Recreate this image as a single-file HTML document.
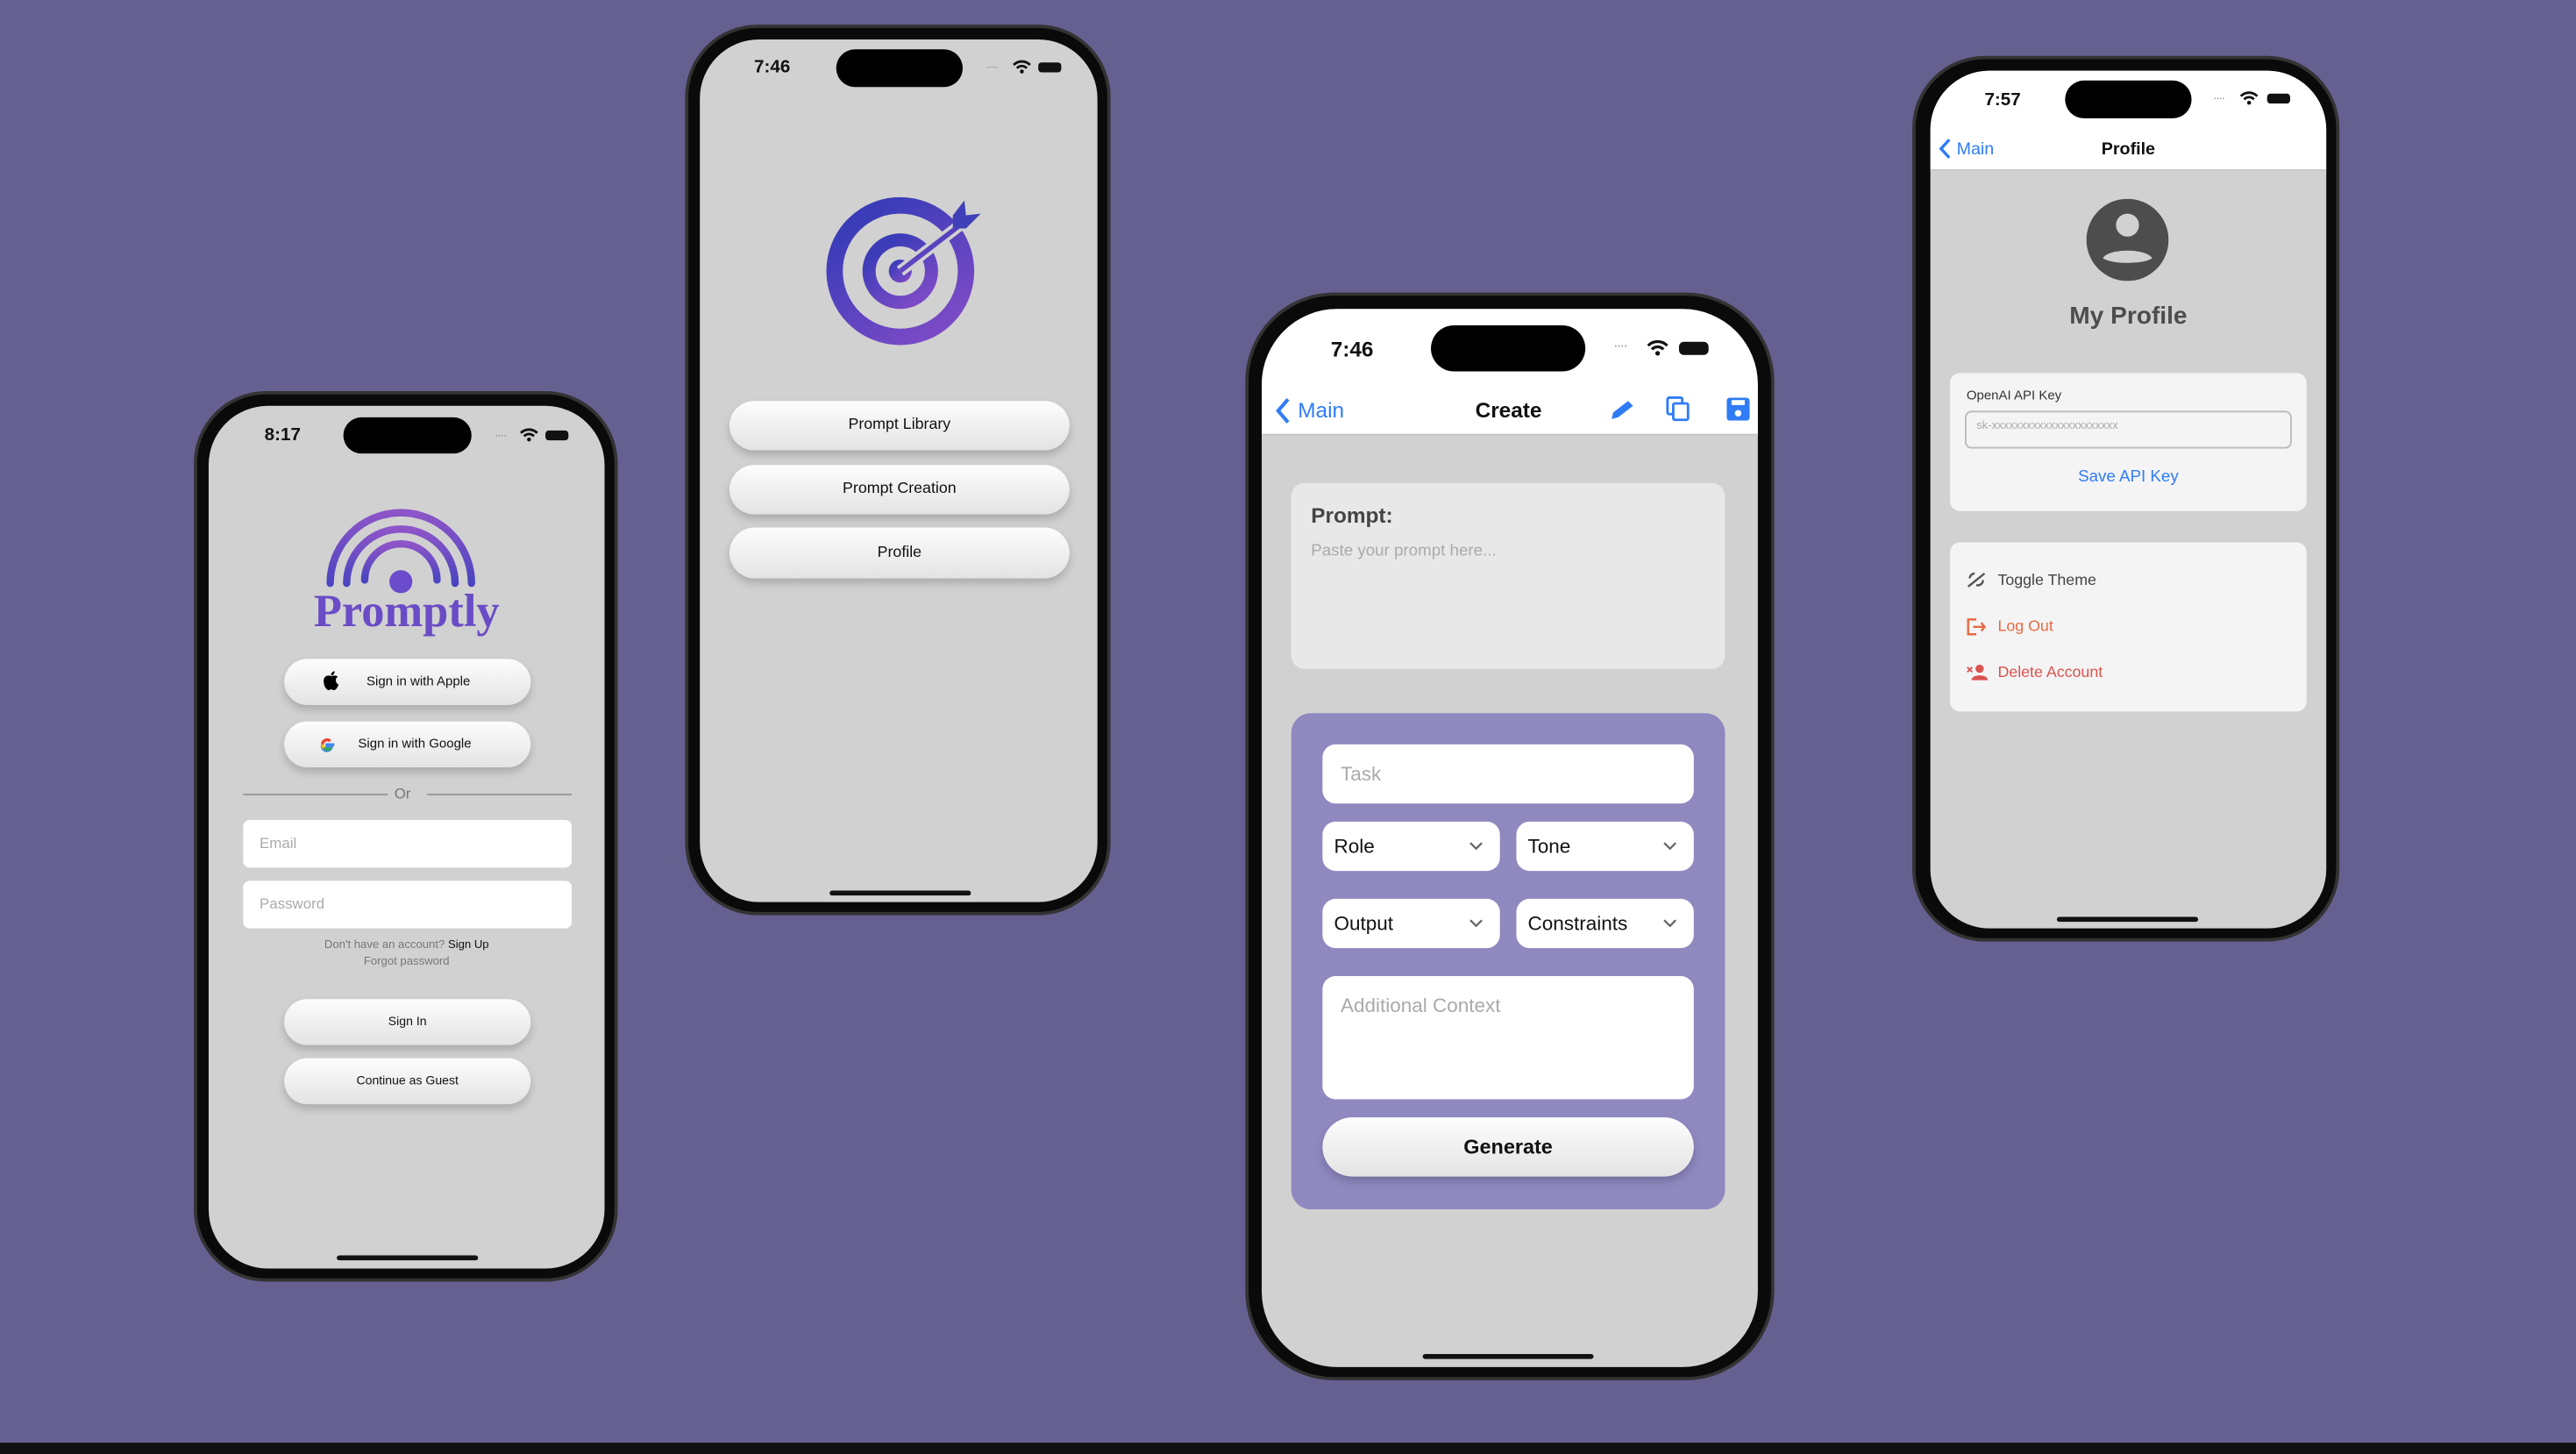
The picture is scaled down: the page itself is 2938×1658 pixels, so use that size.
<!DOCTYPE html>
<html><head><meta charset="utf-8">
<style>
html,body{margin:0;padding:0;width:2938px;height:1657px;overflow:hidden;background:#656090;}
#c{position:absolute;left:0;top:0;width:1568px;height:884.4px;transform:scale(1.87372);transform-origin:0 0;font-family:"Liberation Sans",sans-serif;}
.a{position:absolute;}
.phone{position:absolute;background:#0a0a0a;border:2px solid #333;box-sizing:border-box;}
.scr{position:absolute;background:#d1d1d1;overflow:hidden;}
.isl{position:absolute;background:#000;border-radius:12px;}
.time{position:absolute;font-weight:bold;color:#111;}
.pill{position:absolute;border-radius:16px;background:linear-gradient(#fdfdfd,#e3e3e3);box-shadow:0 3px 5px rgba(0,0,0,.18);text-align:center;color:#111;}
.fld{position:absolute;background:#fff;border-radius:4px;color:#aaa;}
.home{position:absolute;height:3px;background:#111;border-radius:2px;}
.t{position:absolute;white-space:nowrap;}
.chev{position:absolute;left:89px;top:12px;}
</style></head><body><div id="c">

<!-- PHONE 1 -->
<div class="phone" style="left:118px;top:238px;width:258px;height:542px;border-radius:44px;"></div>
<div class="scr" style="left:127px;top:247px;width:241px;height:525px;border-radius:36px;">
  <div class="time" style="left:34px;top:12px;font-size:11px;">8:17</div>
  <div class="isl" style="left:82px;top:7px;width:78px;height:22px;"></div>
  <div class="t" style="left:174px;top:13px;font-size:8px;color:#999;letter-spacing:-1px;">····</div>
  <svg class="a" style="left:189px;top:13px" width="12" height="9" viewBox="0 0 12 9"><path d="M1 3.5a7 7 0 0 1 10 0M3 5.5a4 4 0 0 1 6 0" stroke="#111" stroke-width="1.5" fill="none"/><circle cx="6" cy="7.5" r="1.2" fill="#111"/></svg>
  <div class="a" style="left:205px;top:15px;width:14px;height:6px;background:#111;border-radius:2px;"></div>
  <svg class="a" style="left:70px;top:60px" width="100" height="56" viewBox="0 0 100 56">
    <defs><linearGradient id="g1" x1="0" y1="0" x2="0" y2="1"><stop offset="0" stop-color="#8d55c8"/><stop offset="1" stop-color="#4a45c0"/></linearGradient></defs>
    <g fill="none" stroke="url(#g1)" stroke-width="4.5" stroke-linecap="round">
      <path d="M4 48A43 43 0 0 1 90 48"/><path d="M14 48A33 33 0 0 1 80 48"/><path d="M25 46A22 22 0 0 1 69 46"/></g>
    <circle cx="47" cy="47" r="7" fill="#6a4ccc"/>
  </svg>
  <div class="t" style="left:0;width:241px;text-align:center;top:110px;font-family:'Liberation Serif',serif;font-weight:bold;font-size:28px;color:#6a4cc6;">Promptly</div>
  <div class="pill" style="left:46px;top:154px;width:150px;height:28px;line-height:28px;font-size:8px;">&nbsp;&nbsp;&nbsp;&nbsp;&nbsp;&nbsp;Sign in with Apple</div>
  <svg class="a" style="left:69px;top:161px" width="11" height="13" viewBox="0 0 11 13"><path d="M5.5 3.5C4 2.8 1 3 1 6.5S3 12 4 12s1.2-.5 1.5-.5 1 .5 2 .5 2.5-2.5 2.5-3.5c-1-.5-1.6-1.4-1.6-2.5s.7-1.8 1.2-2.2C8.8 2.9 7 3 5.5 3.5zM5.5 3C5.5 1.5 6.5.6 7.7.5 7.7 2 6.8 3 5.5 3z" fill="#000"/></svg>
  <div class="pill" style="left:46px;top:192px;width:150px;height:28px;line-height:28px;font-size:8px;">&nbsp;&nbsp;&nbsp;&nbsp;Sign in with Google</div>
  <svg class="a" style="left:66px;top:200px" width="12" height="12" viewBox="0 0 12 12"><path d="M10.5 6.2H6v1.8h2.6A2.8 2.8 0 0 1 3.3 6" stroke="#4285f4" stroke-width="1.8" fill="none"/><path d="M3.3 6A2.8 2.8 0 0 1 8 4" stroke="#ea4335" stroke-width="1.8" fill="none"/><path d="M3.3 6a2.8 2.8 0 0 0 1 2.2" stroke="#fbbc05" stroke-width="1.8" fill="none"/><path d="M4.3 8.2A2.8 2.8 0 0 0 8.6 8" stroke="#34a853" stroke-width="1.8" fill="none"/></svg>
  <div class="a" style="left:21px;top:236px;width:88px;height:1px;background:#999;"></div>
  <div class="a" style="left:133px;top:236px;width:88px;height:1px;background:#999;"></div>
  <div class="t" style="left:113px;top:231px;font-size:9px;color:#777;">Or</div>
  <div class="fld" style="left:21px;top:252px;width:200px;height:29px;"><span class="t" style="left:10px;top:9px;font-size:9px;">Email</span></div>
  <div class="fld" style="left:21px;top:289px;width:200px;height:29px;"><span class="t" style="left:10px;top:9px;font-size:9px;">Password</span></div>
  <div class="t" style="left:0;width:241px;text-align:center;top:325px;font-size:7px;color:#777;">Don't have an account? <b style="color:#111;font-weight:normal">Sign Up</b></div>
  <div class="t" style="left:0;width:241px;text-align:center;top:335px;font-size:7px;color:#777;">Forgot password</div>
  <div class="pill" style="left:46px;top:361px;width:150px;height:28px;line-height:28px;font-size:7.5px;">Sign In</div>
  <div class="pill" style="left:46px;top:397px;width:150px;height:28px;line-height:28px;font-size:7.5px;">Continue as Guest</div>
  <div class="home" style="left:78px;top:517px;width:86px;"></div>
</div>

<!-- PHONE 2 -->
<div class="phone" style="left:417px;top:15px;width:259px;height:542px;border-radius:44px;"></div>
<div class="scr" style="left:426px;top:24px;width:242px;height:525px;border-radius:36px;">
  <div class="time" style="left:33px;top:11px;font-size:11px;">7:46</div>
  <div class="isl" style="left:83px;top:6px;width:77px;height:23px;"></div>
  <div class="t" style="left:174px;top:12px;font-size:8px;color:#999;letter-spacing:-1px;">····</div>
  <svg class="a" style="left:190px;top:12px" width="12" height="9" viewBox="0 0 12 9"><path d="M1 3.5a7 7 0 0 1 10 0M3 5.5a4 4 0 0 1 6 0" stroke="#111" stroke-width="1.5" fill="none"/><circle cx="6" cy="7.5" r="1.2" fill="#111"/></svg>
  <div class="a" style="left:206px;top:14px;width:14px;height:6px;background:#111;border-radius:2px;"></div>
  <svg class="a" style="left:76px;top:93px" width="100" height="95" viewBox="0 0 100 95">
    <defs><linearGradient id="g2" x1="0.2" y1="0.1" x2="0.8" y2="0.95"><stop offset="0" stop-color="#3a3cb8"/><stop offset="1" stop-color="#7b4ac6"/></linearGradient></defs>
    <circle cx="46" cy="48" r="40" fill="none" stroke="url(#g2)" stroke-width="10"/>
    <circle cx="46" cy="48" r="19" fill="none" stroke="url(#g2)" stroke-width="8"/>
    <circle cx="46" cy="48" r="7" fill="url(#g2)"/>
    <path d="M46 48L85 18" stroke="#d1d1d1" stroke-width="7"/>
    <path d="M46 48L85 18" stroke="url(#g2)" stroke-width="3"/>
    <path d="M78 14L85 5 86 14 95 13 86 22 78 22Z" fill="#4040b8"/>
  </svg>
  <div class="pill" style="left:18px;top:220px;width:207px;height:30px;line-height:30px;font-size:9.5px;">Prompt Library</div>
  <div class="pill" style="left:18px;top:259px;width:207px;height:30px;line-height:30px;font-size:9.5px;">Prompt Creation</div>
  <div class="pill" style="left:18px;top:297px;width:207px;height:31px;line-height:31px;font-size:9.5px;">Profile</div>
  <div class="home" style="left:79px;top:518px;width:86px;"></div>
</div>

<!-- PHONE 3 -->
<div class="phone" style="left:758px;top:178px;width:322px;height:662px;border-radius:54px;"></div>
<div class="scr" style="left:768px;top:188px;width:302px;height:644px;border-radius:46px;">
  <div class="a" style="left:0;top:0;width:302px;height:76px;background:#fff;border-bottom:1px solid #c6c6c6;"></div>
  <div class="time" style="left:42px;top:17px;font-size:13px;">7:46</div>
  <div class="isl" style="left:103px;top:10px;width:94px;height:28px;border-radius:14px;"></div>
  <div class="t" style="left:214px;top:17px;font-size:9px;color:#999;letter-spacing:-1px;">····</div>
  <svg class="a" style="left:234px;top:18px" width="14" height="11" viewBox="0 0 12 9"><path d="M1 3.5a7 7 0 0 1 10 0M3 5.5a4 4 0 0 1 6 0" stroke="#111" stroke-width="1.5" fill="none"/><circle cx="6" cy="7.5" r="1.2" fill="#111"/></svg>
  <div class="a" style="left:254px;top:20px;width:18px;height:8px;background:#111;border-radius:3px;"></div>
  <svg class="a" style="left:8px;top:54px" width="10" height="16" viewBox="0 0 10 16"><path d="M8 1L2 8l6 7" stroke="#2f7cf6" stroke-width="2.2" fill="none"/></svg>
  <div class="t" style="left:22px;top:54px;font-size:13px;color:#2f7cf6;">Main</div>
  <div class="t" style="left:130px;top:54px;font-size:13px;color:#111;font-weight:bold;">Create</div>
  <svg class="a" style="left:211px;top:54px" width="16" height="14" viewBox="0 0 16 14"><path d="M2 13l1-4 9-7 3 3-9 7z" fill="#2f7cf6"/></svg>
  <svg class="a" style="left:246px;top:53px" width="15" height="16" viewBox="0 0 15 16"><rect x="1" y="1" width="9" height="10" rx="1" fill="none" stroke="#2f7cf6" stroke-width="1.5"/><rect x="4.5" y="4.5" width="9" height="10" rx="1" fill="#fff" stroke="#2f7cf6" stroke-width="1.5"/></svg>
  <svg class="a" style="left:283px;top:54px" width="14" height="14" viewBox="0 0 14 14"><rect x="0" y="0" width="14" height="14" rx="2" fill="#2f7cf6"/><rect x="3" y="1.5" width="8" height="3" fill="#fff"/><circle cx="7" cy="9.5" r="2" fill="#fff"/></svg>
  <div class="a" style="left:18px;top:106px;width:264px;height:113px;background:#e8e8e8;border-radius:8px;"></div>
  <div class="t" style="left:30px;top:118px;font-size:13px;font-weight:bold;color:#444;">Prompt:</div>
  <div class="t" style="left:30px;top:142px;font-size:10px;color:#aaa;">Paste your prompt here...</div>
  <div class="a" style="left:18px;top:246px;width:264px;height:302px;background:#8f89c0;border-radius:12px;"></div>
  <div class="fld" style="left:37px;top:265px;width:226px;height:36px;border-radius:8px;"><span class="t" style="left:11px;top:11px;font-size:12px;">Task</span></div>
  <div class="fld" style="left:37px;top:312px;width:108px;height:30px;border-radius:8px;color:#111;"><span class="t" style="left:7px;top:8px;font-size:12px;">Role</span><svg class="chev" width="9" height="6" viewBox="0 0 9 6"><path d="M1 1l3.5 3.5L8 1" stroke="#666" stroke-width="1.2" fill="none"/></svg></div>
  <div class="fld" style="left:155px;top:312px;width:108px;height:30px;border-radius:8px;color:#111;"><span class="t" style="left:7px;top:8px;font-size:12px;">Tone</span><svg class="chev" width="9" height="6" viewBox="0 0 9 6"><path d="M1 1l3.5 3.5L8 1" stroke="#666" stroke-width="1.2" fill="none"/></svg></div>
  <div class="fld" style="left:37px;top:359px;width:108px;height:30px;border-radius:8px;color:#111;"><span class="t" style="left:7px;top:8px;font-size:12px;">Output</span><svg class="chev" width="9" height="6" viewBox="0 0 9 6"><path d="M1 1l3.5 3.5L8 1" stroke="#666" stroke-width="1.2" fill="none"/></svg></div>
  <div class="fld" style="left:155px;top:359px;width:108px;height:30px;border-radius:8px;color:#111;"><span class="t" style="left:7px;top:8px;font-size:12px;">Constraints</span><svg class="chev" width="9" height="6" viewBox="0 0 9 6"><path d="M1 1l3.5 3.5L8 1" stroke="#666" stroke-width="1.2" fill="none"/></svg></div>
  <div class="fld" style="left:37px;top:406px;width:226px;height:75px;border-radius:8px;"><span class="t" style="left:11px;top:11px;font-size:12px;">Additional Context</span></div>
  <div class="pill" style="left:37px;top:492px;width:226px;height:36px;line-height:36px;font-size:12.5px;border-radius:18px;font-weight:bold;">Generate</div>
  <div class="home" style="left:98px;top:636px;width:104px;"></div>
</div>

<!-- PHONE 4 -->
<div class="phone" style="left:1164px;top:34px;width:260px;height:539px;border-radius:44px;"></div>
<div class="scr" style="left:1175px;top:43px;width:241px;height:522px;border-radius:36px;">
  <div class="a" style="left:0;top:0;width:241px;height:60px;background:#fff;border-bottom:1px solid #c6c6c6;"></div>
  <div class="time" style="left:33px;top:12px;font-size:11px;">7:57</div>
  <div class="isl" style="left:82px;top:6px;width:77px;height:23px;"></div>
  <div class="t" style="left:172px;top:12px;font-size:8px;color:#999;letter-spacing:-1px;">····</div>
  <svg class="a" style="left:188px;top:12px" width="12" height="9" viewBox="0 0 12 9"><path d="M1 3.5a7 7 0 0 1 10 0M3 5.5a4 4 0 0 1 6 0" stroke="#111" stroke-width="1.5" fill="none"/><circle cx="6" cy="7.5" r="1.2" fill="#111"/></svg>
  <div class="a" style="left:205px;top:14px;width:14px;height:6px;background:#111;border-radius:2px;"></div>
  <svg class="a" style="left:5px;top:41px" width="8" height="13" viewBox="0 0 8 13"><path d="M6.5 1L1.5 6.5l5 5.5" stroke="#2f7cf6" stroke-width="1.8" fill="none"/></svg>
  <div class="t" style="left:16px;top:42px;font-size:10.5px;color:#2f7cf6;">Main</div>
  <div class="t" style="left:0;width:241px;text-align:center;top:42px;font-size:10.5px;font-weight:bold;color:#111;">Profile</div>
  <svg class="a" style="left:95px;top:78px" width="50" height="50" viewBox="0 0 50 50"><circle cx="25" cy="25" r="25" fill="#4d4d4d"/><circle cx="25" cy="16" r="7" fill="#d1d1d1"/><path d="M10 36c4-6 26-6 30 0c-4 4-26 4-30 0z" fill="#d1d1d1"/></svg>
  <div class="t" style="left:0;width:241px;text-align:center;top:141px;font-size:15px;font-weight:bold;color:#4d4d4d;">My Profile</div>
  <div class="a" style="left:12px;top:184px;width:217px;height:84px;background:#f4f4f4;border-radius:6px;"></div>
  <div class="t" style="left:22px;top:193px;font-size:8px;color:#333;">OpenAI API Key</div>
  <div class="a" style="left:21px;top:207px;width:197px;height:21px;border:1px solid #bbb;border-radius:4px;"></div>
  <div class="t" style="left:28px;top:213px;font-size:7px;color:#aaa;">sk-xxxxxxxxxxxxxxxxxxxxxx</div>
  <div class="t" style="left:0;width:241px;text-align:center;top:242px;font-size:10px;color:#2f7cf6;">Save API Key</div>
  <div class="a" style="left:12px;top:287px;width:217px;height:103px;background:#f4f4f4;border-radius:6px;"></div>
  <svg class="a" style="left:22px;top:305px" width="12" height="10" viewBox="0 0 12 10"><path d="M1 9L11 1M2 4a3 3 0 0 1 3-3M6 8a3 3 0 0 0 4-3" stroke="#555" stroke-width="1.3" fill="none"/></svg>
  <div class="t" style="left:41px;top:305px;font-size:9.5px;color:#444;">Toggle Theme</div>
  <svg class="a" style="left:22px;top:333px" width="12" height="11" viewBox="0 0 12 11"><path d="M6 1H1v9h5M4 5.5h7M9 3l2 2.5L9 8" stroke="#e76a43" stroke-width="1.3" fill="none"/></svg>
  <div class="t" style="left:41px;top:333px;font-size:9.5px;color:#e76a43;">Log Out</div>
  <svg class="a" style="left:22px;top:361px" width="13" height="10" viewBox="0 0 13 10"><circle cx="8" cy="3" r="2.5" fill="#d9534f"/><path d="M3 10c0-4 10-4 10 0z" fill="#d9534f"/><path d="M0.5 2l3 3M3.5 2l-3 3" stroke="#d9534f" stroke-width="1"/></svg>
  <div class="t" style="left:41px;top:361px;font-size:9.5px;color:#d9534f;">Delete Account</div>
  <div class="home" style="left:77px;top:515px;width:86px;"></div>
</div>

<div class="a" style="left:0;top:878px;width:1568px;height:7px;background:#111;"></div>
</div></body></html>
